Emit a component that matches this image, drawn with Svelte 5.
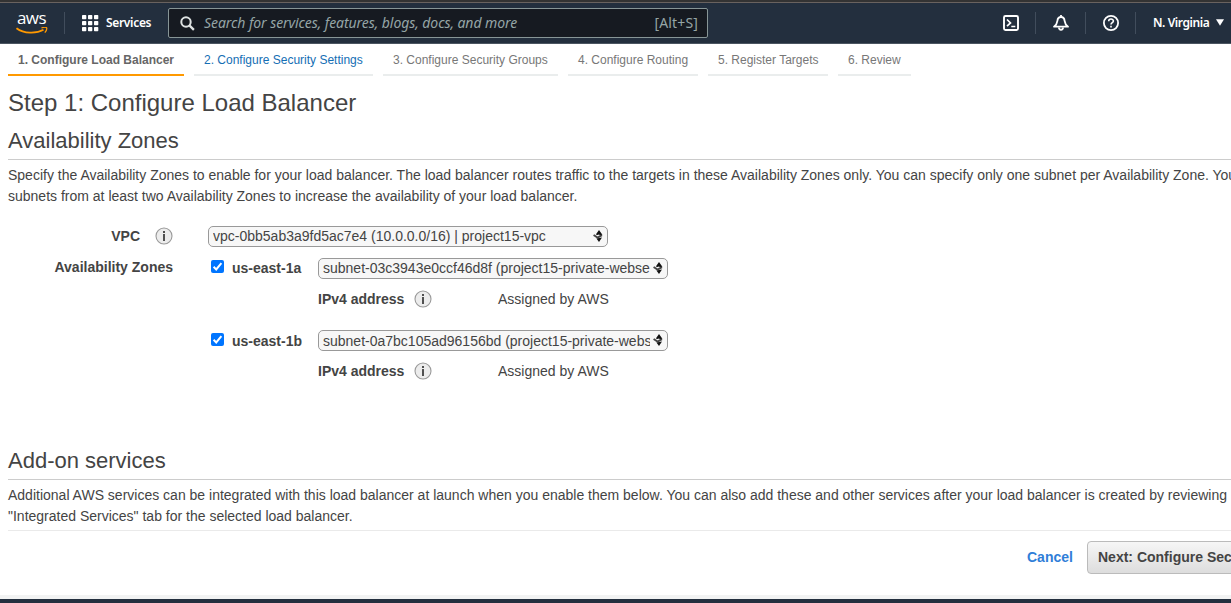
<script>
  const steps = [
    { label: '1. Configure Load Balancer', state: 'active', width: 176 },
    { label: '2. Configure Security Settings', state: 'link', width: 179 },
    { label: '3. Configure Security Groups', state: '', width: 175 },
    { label: '4. Configure Routing', state: '', width: 130 },
    { label: '5. Register Targets', state: '', width: 120 },
    { label: '6. Review', state: '', width: 73 }
  ];
  const zones = [
    { name: 'us-east-1a', subnet: 'subnet-03c3943e0ccf46d8f (project15-private-webse' },
    { name: 'us-east-1b', subnet: 'subnet-0a7bc105ad96156bd (project15-private-webs' }
  ];
</script>

{#snippet info()}
  <svg class="info" width="18" height="18" viewBox="0 0 18 18">
    <circle cx="9" cy="9" r="8" fill="#ececec" stroke="#999" stroke-width="1.1" />
    <path d="M8 4h2v2H8zM8 7h2v7H8z" fill="#505050" />
  </svg>
{/snippet}

{#snippet arrows()}
  <svg class="arrows" width="10" height="12" viewBox="0 0 10 12">
    <path d="M6 0 9.4 4.8 7.4 5.4 6 4.6 4.4 5 2.8 4.4zM3.4 8.6 6 8 9 7.6 6 12z" fill="#111" />
    <path d="M.6 5 4.6 7.6 9 5.2" fill="none" stroke="#444" stroke-width="1.9" />
  </svg>
{/snippet}

<div class="page">
  <header>
    <div class="logo">
      <span>aws</span>
      <svg width="32" height="8" viewBox="0 0 32 8">
        <path d="M.5 1.2C8 6.8 20 7 27.5 2.8" fill="none" stroke="#f90" stroke-width="1.8" />
        <path d="M25.4 1C28 .1 30.3.3 30.6.8 30.9 1.6 30.2 4 28.8 5.6" fill="none" stroke="#f90" stroke-width="1.3" />
      </svg>
    </div>
    <i class="sep s0"></i>
    <svg class="grid" width="17" height="17" viewBox="0 0 17 17" fill="#fff">
      {#each [0, 6, 12] as y}
        {#each [0, 6, 12] as x}
          <rect {x} {y} width="4.3" height="4.3" rx=".7" />
        {/each}
      {/each}
    </svg>
    <span class="services">Services</span>
    <div class="search">
      <svg width="15" height="15" viewBox="0 0 15 15" fill="none" stroke="#dfe3e3" stroke-width="2">
        <circle cx="6" cy="6" r="4.7" /><path d="m9.4 9.4 4.5 4.5" stroke-width="2.3" />
      </svg>
      <em>Search for services, features, blogs, docs, and more</em>
      <span>[Alt+S]</span>
    </div>
    <div class="tools">
      <div class="tool">
        <svg width="18" height="18" viewBox="0 0 18 18" fill="none" stroke="#fff" stroke-width="1.9">
          <rect x="2" y="2" width="14" height="14" rx="1.5" /><path d="m5 5.5 3.5 3.4L5 12.2M9.3 12.5h4" stroke-width="1.7" />
        </svg>
      </div>
      <div class="tool">
        <svg width="18" height="18" viewBox="0 0 18 18" fill="none" stroke="#fff" stroke-width="1.8" stroke-linejoin="round">
          <path d="M9 1v2M9 3C6.6 3 5.6 4.7 5.4 6.8 5.1 9.2 4.2 11 2 12.7h14c-2.2-1.7-3.1-3.5-3.4-5.9C12.4 4.7 11.4 3 9 3z" /><path d="M6.9 13.5c.1 3 4.1 3 4.2 0" />
        </svg>
      </div>
      <div class="tool">
        <svg width="18" height="18" viewBox="0 0 18 18" fill="none" stroke="#fff" stroke-width="1.8">
          <circle cx="9" cy="9" r="7.1" /><path d="M6.7 7.2C6.7 4.3 11.4 4.4 11.4 7c0 1.7-2.4 1.6-2.4 3.5M9 11.7v1.7" stroke-width="1.6" />
        </svg>
      </div>
      <span class="region">N. Virginia</span>
      <svg class="caret" width="8" height="7" viewBox="0 0 8 7"><path d="M0 .3h8L4 6.7z" fill="#fff" /></svg>
    </div>
  </header>

  <nav>
    {#each steps as s}
      <div class="step {s.state}" style="width:{s.width}px">{s.label}</div>
    {/each}
  </nav>

  <main>
    <h1>Step 1: Configure Load Balancer</h1>
    <h2>Availability Zones</h2>
    <p>Specify the Availability Zones to enable for your load balancer. The load balancer routes traffic to the targets in these Availability Zones only. You can specify only one subnet per Availability Zone. You<br />subnets from at least two Availability Zones to increase the availability of your load balancer.</p>

    <div class="form">
      <div class="labels">
        <div class="vpc"><b>VPC</b>{@render info()}</div>
        <b class="az">Availability Zones</b>
      </div>
      <div class="fields">
        <div class="select wide"><span>vpc-0bb5ab3a9fd5ac7e4 (10.0.0.0/16) | project15-vpc</span>{@render arrows()}</div>
        {#each zones as z, i}
          <div class="zone">
            <svg class="check" class:lower={i === 1} width="13" height="13" viewBox="0 0 13 13">
              <rect width="13" height="13" rx="2" fill="#0075ff" /><path d="m2.6 6.8 2.6 2.6 5.2-6.2" fill="none" stroke="#fff" stroke-width="2" />
            </svg>
            <b class="name" class:lower={i === 1}>{z.name}</b>
            <div class="detail">
              <div class="select" class:lower={i === 1}><span>{z.subnet}</span>{@render arrows()}</div>
              <div class="ip"><b>IPv4 address</b>{@render info()}<span>Assigned by AWS</span></div>
            </div>
          </div>
        {/each}
      </div>
    </div>

    <h2>Add-on services</h2>
    <p>Additional AWS services can be integrated with this load balancer at launch when you enable them below. You can also add these and other services after your load balancer is created by reviewing<br />"Integrated Services" tab for the selected load balancer.</p>
    <div class="actions">
      <b class="cancel">Cancel</b>
      <div class="next">Next: Configure Security Settings</div>
    </div>
  </main>
  <footer></footer>
</div>

<style>
  :global(body) { background: #fff; overflow: hidden; }
  .page { width: 1231px; height: 603px; overflow: hidden; display: flex; flex-direction: column; font: 14px/21px "Liberation Sans", Arial, sans-serif; color: #444; }
  .page * { box-sizing: border-box; }
  svg { display: block; flex: none; }
  header { height: 44px; flex: none; display: flex; align-items: center; background: #232f3e; border-top: 2px solid #333; border-bottom: 1px solid #4b5561; box-shadow: inset 0 1px #69625f; font-family: "Noto Sans", sans-serif; color: #fff; }
  .logo { width: 32px; margin-left: 16px; height: 28px; }
  .logo span { display: block; height: 18px; font: 500 17px/17px "Open Sans", sans-serif; letter-spacing: -.6px; padding-left: 1px; }
  .sep { width: 1px; height: 22px; background: #414d5c; }
  .s0 { margin-left: 16px; }
  .grid { margin-left: 17px; margin-top: 1px; }
  .services { width: 62px; margin-left: 7px; font-size: 12px; font-weight: 600; letter-spacing: -.32px; }
  .search { width: 540px; height: 30px; margin-top: 1px; border: 1px solid #879596; border-radius: 2px; background: #161a21; display: flex; align-items: center; padding: 0 9px 0 11px; color: #95a5a6; font-size: 14px; line-height: 20px; }
  .search em { margin-left: 9px; flex: 1; white-space: nowrap; letter-spacing: -.07px; }
  .search span { letter-spacing: .15px; }
  .tools { margin-left: 294px; height: 22px; display: flex; align-items: center; }
  .tool { height: 22px; width: 50px; padding-top: 2px; border-right: 1px solid #414d5c; }
  .tool:first-child { width: 34px; }
  .tool:not(:first-child) { padding-left: 16px; }
  .region { width: 58px; margin-left: 17px; font-size: 12px; font-weight: 600; white-space: nowrap; letter-spacing: -.42px; }
  .caret { margin-left: 5px; }
  nav { display: flex; gap: 10px; padding-left: 8px; height: 32px; flex: none; }
  .step { height: 32px; flex: none; padding-left: 10px; border-bottom: 2px solid #eaeded; font-size: 12px; line-height: 32px; color: #777; white-space: nowrap; }
  .active { font-weight: bold; color: #666; border-color: #f90; }
  .link { color: #146eb4; }
  main { padding-left: 8px; height: 519px; flex: none; }
  h1, h2, p { margin: 0; font-weight: normal; white-space: nowrap; }
  h1 { font-size: 24px; line-height: 30px; padding-top: 12px; height: 45px; }
  h2 { font-size: 22px; line-height: 30px; height: 39px; padding-top: 5px; border-bottom: 1px solid #ccc; }
  p { padding-top: 5px; }
  .form { display: flex; height: 234px; padding-top: 19px; }
  .labels { width: 165px; margin-right: 35px; display: flex; flex-direction: column; align-items: flex-end; }
  .vpc { display: flex; align-items: center; gap: 15px; height: 21px; }
  .info { margin-top: -1px; }
  .az { margin-top: 10px; }
  .select { width: 350px; height: 21px; display: flex; align-items: center; border: 1px solid #999; border-radius: 5px; background: #f7f7f7; padding: 0 3px 0 4px; }
  .select span { flex: 1; overflow: hidden; white-space: nowrap; line-height: 19px; }
  .select.lower span { height: 19px; padding-top: 1px; line-height: 18px; }
  .select.lower span { line-height: 19px; }
  .wide { width: 400px; margin-bottom: 11px; }
  .arrows { margin: -2px 1px 0 3px; }
  .zone { display: flex; height: 72px; }
  .check { margin: 2px 8px 0 3px; }
  .check.lower { margin-top: 3px; }
  .name { width: 86px; line-height: 21px; }
  .name.lower { line-height: 22px; }
  .ip { display: flex; align-items: center; height: 21px; margin-top: 10px; }
  .ip b { width: 96px; }
  .ip span { margin-left: 66px; }
  .actions { display: flex; margin-top: 3px; padding-top: 10px; border-top: 1px solid #eaeaea; }
  .cancel { width: 60px; margin-left: 1019px; line-height: 33px; color: #2f7ed8; flex: none; }
  .next { width: 260px; flex: none; height: 33px; padding-left: 10px; border: 1px solid #bbb; border-radius: 4px; background: linear-gradient(#f6f6f6, #ddd); font-weight: bold; line-height: 31px; white-space: nowrap; }
  footer { height: 8px; flex: none; background: #232f3e; border-top: 4px solid #f2f3f3; }
</style>
